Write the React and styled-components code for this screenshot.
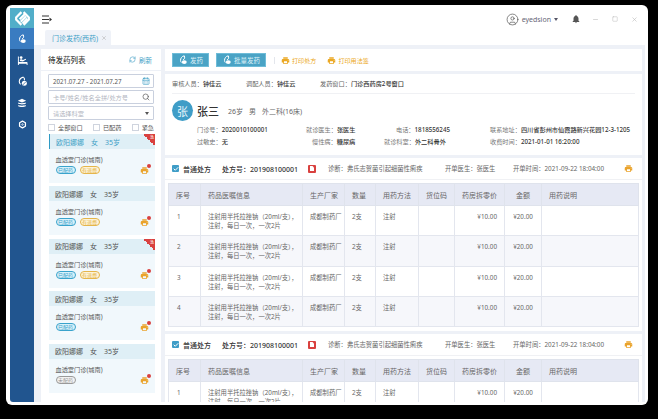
import React from "react";
import styled, { createGlobalStyle } from "styled-components";
import { Search, CalendarDays, RefreshCw, CircleUser, X, Minus, Square, Check } from "lucide-react";
import { MdLocalPrintshop, MdNotifications } from "react-icons/md";

const GlobalStyle = createGlobalStyle`
  html, body { margin: 0; height: 100%; background: #000; }
  * { box-sizing: border-box; }
  body { font-family: "Noto Sans", "Noto Sans CJK SC", sans-serif; color: #555; overflow: hidden; }
  #root { height: 100%; }
`;

const Frame = styled.div`
  width: 658px;
  height: 419px;
  padding: 5px 10px 14px 6px;
`;

const Win = styled.div`
  height: 100%;
  display: flex;
  background: #fff;
  border-radius: 6px;
  padding: 3px 3px 3px 4px;
  overflow: hidden;
`;

const Sidebar = styled.nav`
  width: 24px;
  flex: none;
  background: #21558f;
  border-radius: 3px 0 0 3px;
`;

const Logo = styled.div`
  height: 20px;
  background: #52aec9;
  display: flex;
  align-items: center;
  justify-content: center;
`;

const NavItem = styled.div`
  height: 21.4px;
  display: flex;
  align-items: center;
  justify-content: center;
  background: ${(p) => (p.$active ? "#3a7cc1" : "transparent")};
`;

const Main = styled.div`
  flex: 1;
  min-width: 0;
  display: flex;
  flex-direction: column;
`;

const TopBar = styled.header`
  height: 22px;
  flex: none;
  display: flex;
  align-items: center;
  padding: 0 7px 0 8px;
`;

const UserBox = styled.div`
  margin-left: auto;
  display: flex;
  align-items: center;
  font-size: 7px;
  color: #667;
`;

const UserName = styled.span`
  margin-left: 3px;
`;

const Caret = styled.span`
  width: 0;
  height: 0;
  margin-left: 3px;
  border-left: 2.5px solid transparent;
  border-right: 2.5px solid transparent;
  border-top: 3px solid #556;
`;

const WinButtons = styled.div`
  display: flex;
  align-items: center;
  gap: 13px;
  margin-left: 13px;
  svg:first-child { margin-right: -2px; }
`;

const TabRow = styled.div`
  height: 15px;
  flex: none;
  padding-left: 11px;
  display: flex;
`;

const Tab = styled.div`
  width: 66px;
  background: #eff2f8;
  border-radius: 2px 2px 0 0;
  display: flex;
  align-items: center;
  padding-left: 7px;
  gap: 3px;
  font-size: 7px;
  color: #3f9fc6;
`;

const Content = styled.div`
  flex: 1;
  min-height: 0;
  background: #eef1f7;
  display: flex;
  gap: 4px;
  padding: 4px 3px 0 7px;
`;

const ListPanel = styled.aside`
  width: 120px;
  flex: none;
  background: #fff;
  display: flex;
  flex-direction: column;
  overflow: hidden;
`;

const ListHead = styled.div`
  height: 22px;
  flex: none;
  display: flex;
  align-items: center;
  justify-content: space-between;
  padding: 0 9px 0 7px;
  border-bottom: 1px solid #eef1f7;
  font-size: 7.5px;
  font-weight: 500;
  color: #444;
`;

const Refresh = styled.span`
  display: flex;
  align-items: center;
  gap: 3px;
  font-size: 6.5px;
  font-weight: 400;
  color: #3f9fc6;
`;

const Filters = styled.div`
  padding: 3px 7px 0;
  display: flex;
  flex-direction: column;
  gap: 2px;
`;

const Field = styled.div`
  height: 14px;
  border: 1px solid #c9d0de;
  border-radius: 1px;
  display: flex;
  align-items: center;
  justify-content: space-between;
  padding: 0 3px 0 4px;
  font-size: 6.2px;
  color: ${(p) => (p.$value ? "#555" : "#b2b6bf")};
`;

const SelectCaret = styled.span`
  width: 0;
  height: 0;
  margin-right: 1px;
  border-left: 2.5px solid transparent;
  border-right: 2.5px solid transparent;
  border-top: 3px solid #555;
`;

const Checks = styled.div`
  display: flex;
  justify-content: space-between;
  height: 10px;
  align-items: center;
  font-size: 6.2px;
  color: #555;
`;

const CheckLabel = styled.label`
  display: flex;
  align-items: center;
  gap: 3px;
`;

const BoxEmpty = styled.span`
  width: 7px;
  height: 7px;
  border: 1px solid #cfd4de;
  background: #fff;
`;

const CardList = styled.div`
  padding: 2px 6px 0 8px;
  display: flex;
  flex-direction: column;
  gap: 3.4px;
`;

const Card = styled.div`
  position: relative;
  height: 49px;
  background: #f1f8fc;
  overflow: hidden;
`;

const CardHead = styled.div`
  height: 15px;
  background: #dfeff6;
  display: flex;
  align-items: center;
  padding-left: 6px;
  font-size: 7px;
  color: ${(p) => (p.$active ? "#3f9fc6" : "#555")};
  border-left: ${(p) => (p.$active ? "1px solid #2f9ac4" : "0 none")};
  span + span { margin-left: 7px; }
`;

const Ribbon = styled.div`
  position: absolute;
  top: 0;
  right: 0;
  width: 12px;
  height: 12px;
  background: linear-gradient(45deg, transparent 50%, #d9413f 50%);
  color: #fff;
  font-size: 4px;
  line-height: 8px;
  text-align: right;
  padding-right: 1px;
`;

const CardBody = styled.div`
  padding: 6px 6px 0 6.5px;
  font-size: 6.2px;
  line-height: 9px;
  color: #555;
`;

const TagRow = styled.div`
  display: flex;
  align-items: center;
  gap: 4px;
  margin-top: 2px;
`;

const tagColors = {
  blue: ["#39a3cc", "#d9f1fa"],
  yellow: ["#e5b54a", "#fdf3d8"],
  grey: ["#999", "#f3f3f3"],
};

const Tag = styled.span`
  height: 8px;
  width: 20px;
  border-radius: 4px;
  border: 0.7px solid ${(p) => tagColors[p.$kind][0]};
  background: ${(p) => tagColors[p.$kind][1]};
  color: ${(p) => tagColors[p.$kind][0]};
  font-size: 5px;
  line-height: 6.5px;
  text-align: center;
`;

const Refund = styled.div`
  position: absolute;
  right: 6px;
  bottom: 8px;
  width: 9px;
  height: 9px;
  color: #eaa32b;
  display: flex;
`;

const Dot = styled.span`
  position: absolute;
  top: -2px;
  right: -2px;
  width: 4px;
  height: 4px;
  border-radius: 50%;
  background: #d9413f;
`;

const Detail = styled.section`
  flex: 1;
  min-width: 0;
  display: flex;
  flex-direction: column;
  gap: 3px;
  overflow: hidden;
`;

const ActionBar = styled.div`
  height: 22px;
  flex: none;
  background: #fff;
  display: flex;
  align-items: center;
  padding: 0 7px;
`;

const ActionButton = styled.button`
  height: 14px;
  width: ${(p) => p.$w}px;
  margin-right: 7px;
  border: 1px solid #6fbcd8;
  background: #4aa3c5;
  color: #dff1f7;
  font: inherit;
  font-size: 6.5px;
  padding: 0;
  display: flex;
  align-items: center;
  justify-content: center;
  gap: 2px;
`;

const Sep = styled.span`
  width: 1px;
  height: 7px;
  background: #e3e6ec;
  margin: 0 4px 0 1px;
`;

const PrintLink = styled.span`
  display: flex;
  align-items: center;
  gap: 2px;
  margin-left: 2px;
  margin-right: 9px;
  font-size: 6.1px;
  color: #eba823;
`;

const InfoCard = styled.div`
  height: 81px;
  flex: none;
  background: #fff;
  padding: 0 7px;
`;

const AuditRow = styled.div`
  height: 20px;
  display: flex;
  align-items: center;
  border-bottom: 1px solid #f0f1f4;
  font-size: 6.2px;
  color: #666;
`;

const AuditItem = styled.span`
  width: ${(p) => p.$w}px;
  b { font-weight: 500; color: #333; }
`;

const Patient = styled.div`
  display: flex;
  align-items: center;
  height: 29px;
  margin-top: 2px;
  font-size: 7px;
  color: #666;
`;

const Avatar = styled.div`
  width: 21px;
  height: 21px;
  border-radius: 50%;
  background: #3f9dc7;
  color: #e8f6fb;
  font-size: 11px;
  display: flex;
  align-items: center;
  justify-content: center;
  margin-right: 4px;
`;

const PatientName = styled.strong`
  font-size: 11px;
  font-weight: 500;
  color: #333;
  width: 31px;
`;

const PatientFact = styled.span`
  width: ${(p) => (p.$w ? `${p.$w}px` : "auto")};
`;

const Facts = styled.div`
  display: grid;
  grid-template-columns: 109px 90px 94px 1fr;
  padding-left: 25px;
  row-gap: 3px;
  font-size: 6.2px;
  line-height: 9px;
  color: #777;
  white-space: nowrap;
`;

const Fact = styled.div`
  margin-left: ${(p) => p.$ml || 0}px;
  b { font-weight: 500; color: #333; }
`;

const Rx = styled.div`
  flex: none;
  background: #fff;
  padding-bottom: 4px;
`;

const RxHead = styled.div`
  height: 22px;
  display: flex;
  align-items: center;
  padding: 0 9px 0 7px;
  border-bottom: 1px solid #f0f1f4;
  margin-bottom: 3px;
  font-size: 6.3px;
  color: #666;
  white-space: nowrap;
`;

const RxCheck = styled.span`
  width: 7px;
  height: 7px;
  background: #3f9dc7;
  border-radius: 1px;
  color: #fff;
  display: flex;
  align-items: center;
  justify-content: center;
  margin-right: 4px;
`;

const RxType = styled.b`
  font-size: 7px;
  font-weight: 500;
  color: #333;
  width: 39px;
`;

const RxNo = styled.b`
  font-size: 7px;
  font-weight: 500;
  color: #333;
  width: 86px;
`;

const PdfBadge = styled.span`
  width: 8px;
  height: 8px;
  border-radius: 1px;
  background: #d9413f;
  margin-right: 12px;
  display: flex;
  align-items: center;
  justify-content: center;
`;

const Meta = styled.span`
  width: ${(p) => p.$w}px;
  color: #666;
`;

const RxPrint = styled.span`
  margin-left: auto;
  display: flex;
  color: #eaa32b;
`;

const Table = styled.table`
  width: 470px;
  margin-left: 3px;
  table-layout: fixed;
  border-collapse: collapse;
  font-size: 6.3px;
  color: #666;
`;

const Th = styled.th`
  height: 22px;
  background: #e6e9f4;
  border: 1px solid #dfe3ec;
  font-weight: 400;
  font-size: 7px;
  color: #666;
  white-space: nowrap;
  text-align: ${(p) => p.$align || "left"};
  padding: 0 0 0 ${(p) => p.$pl ?? 7}px;
`;

const Td = styled.td`
  height: 30.3px;
  border: 1px solid #e3e6ee;
  vertical-align: top;
  line-height: 9px;
  padding: 6px ${(p) => p.$pr || 0}px 0 ${(p) => p.$pl ?? 7}px;
  text-align: ${(p) => p.$align || "left"};
  tr:nth-child(even) > & { background: #f6f7fb; }
`;

const widths = [32, 102, 42, 31, 43, 36, 50, 37, 97];
const heads = ["序号", "药品医嘱信息", "生产厂家", "数量", "用药方法", "货位码", "药房拆零价", "金额", "用药说明"];

const LeafPill = () => (
  <svg width="10" height="10" viewBox="0 0 24 24" fill="none" stroke="#fff" strokeWidth="2.4">
    <path d="M15 2c-6 1-9 6-9 11 0 2 1 4 2 5" />
    <path d="M15 2c2 4 1 8-3 10" />
    <ellipse cx="15" cy="17" rx="6" ry="4.5" fill="#fff" stroke="none" />
  </svg>
);

const BedIcon = () => (
  <svg width="11" height="11" viewBox="0 0 24 24" fill="#fff">
    <circle cx="9" cy="5.5" r="3" />
    <path d="M2 3h2v12h17c1 0 2 1 2 2v5h-2v-3H4v3H2z" />
    <path d="M6 13l1-3c1-1 3-1 4 0l2 1 6-3 1 2-7 4z" />
  </svg>
);

const PillCircle = () => (
  <svg width="11" height="11" viewBox="0 0 24 24" fill="none" stroke="#fff" strokeWidth="2.4">
    <path d="M14 2.500c-5 1-9 5-9 10 0 2 1 4 3 6" />
    <path d="M14 2.500c2 2 3 5 2 7" />
    <circle cx="16" cy="16" r="5.500" fill="#fff" stroke="none" />
    <path d="M12.500 19.500l7-7" stroke="#21558f" strokeWidth="1.600" />
  </svg>
);

const Stack = () => (
  <svg width="10" height="10" viewBox="0 0 24 24" fill="#fff">
    <path d="M12 2l10 4.500-10 4.500L2 6.500z" />
    <path d="M3 11c3 2 15 2 18 0v3c-3 2-15 2-18 0z" />
    <path d="M3 17c3 2 15 2 18 0v2.500c-3 2.500-15 2.500-18 0z" />
  </svg>
);

const Gear = () => (
  <svg width="9" height="9" viewBox="0 0 24 24" fill="none" stroke="#fff">
    <path d="M12 3l7.800 4.500v9L12 21l-7.800-4.500v-9z" strokeWidth="3.400" strokeLinejoin="round" />
    <circle cx="12" cy="12" r="2" strokeWidth="2" />
  </svg>
);

const LogoMark = () => (
  <svg width="17" height="17" viewBox="0 0 24 24" fill="none" stroke="#fff" strokeWidth="3">
    <path d="M10.500 3L3 10.500v3L10.500 21" />
    <path d="M13.500 3L21 10.500v3L13.500 21" />
    <path d="M8 13l7.500-7.500M9.500 16.500l7.500-7.500M12 19l7-7" />
  </svg>
);

const MenuIcon = () => (
  <svg width="10" height="9" viewBox="0 0 10 9" fill="#333">
    <rect x="0" y="0.500" width="7" height="1" />
    <rect x="0" y="4" width="7" height="1" />
    <rect x="0" y="7.500" width="7" height="1" />
    <path d="M7.500 2.500L10 4.500 7.500 6.500z" />
  </svg>
);

const PatientCard = ({ active, ribbon, kind = "blue", label = "已配药", refund }) => (
  <Card>
    <CardHead $active={active}>
      <span>欧阳娜娜</span>
      <span>女</span>
      <span>35岁</span>
    </CardHead>
    {ribbon && <Ribbon>急</Ribbon>}
    <CardBody>
      血透室门诊(城南)
      <TagRow>
        <Tag $kind={kind}>{label}</Tag>
        {refund && <Tag $kind="yellow">有退费</Tag>}
      </TagRow>
    </CardBody>
    <Refund>
      <MdLocalPrintshop size={9} />
      <Dot />
    </Refund>
  </Card>
);

const Prescription = ({ rows }) => (
  <Rx>
    <RxHead>
      <RxCheck><Check size={6} strokeWidth={4} /></RxCheck>
      <RxType>普通处方</RxType>
      <RxNo>处方号：201908100001</RxNo>
      <PdfBadge>
        <svg width="4" height="5" viewBox="0 0 4 5" fill="#fff"><path d="M0 0h2.500L4 1.500V5H0z" /></svg>
      </PdfBadge>
      <Meta $w={117}>诊断：弗氏志贺菌引起细菌性痢疾</Meta>
      <Meta $w={68}>开单医生：张医生</Meta>
      <Meta $w={90}>开单时间：2021-09-22 18:04:00</Meta>
      <RxPrint><MdLocalPrintshop size={9} /></RxPrint>
    </RxHead>
    <Table>
      <colgroup>
        {widths.map((w, i) => <col key={i} style={{ width: w }} />)}
      </colgroup>
      <thead>
        <tr>
          {heads.map((h, i) => (
            <Th key={h} $align={i === 7 ? "center" : "left"} $pl={i === 7 ? 0 : 7}>{h}</Th>
          ))}
        </tr>
      </thead>
      <tbody>
        {rows.map((n) => (
          <tr key={n}>
            <Td $pl={8}>{n}</Td>
            <Td>注射用半托拉挫钠（20ml/支），<br />注射，每日一次，一次2片</Td>
            <Td>成都制药厂</Td>
            <Td>2支</Td>
            <Td>注射</Td>
            <Td />
            <Td $align="right" $pr={7}>¥10.00</Td>
            <Td $align="center" $pl={0}>¥20.00</Td>
            <Td />
          </tr>
        ))}
      </tbody>
    </Table>
  </Rx>
);

export default function App() {
  return (
    <Frame>
      <GlobalStyle />
      <Win>
        <Sidebar>
          <Logo><LogoMark /></Logo>
          <NavItem $active><LeafPill /></NavItem>
          <NavItem><BedIcon /></NavItem>
          <NavItem><PillCircle /></NavItem>
          <NavItem><Stack /></NavItem>
          <NavItem><Gear /></NavItem>
        </Sidebar>
        <Main>
          <TopBar>
            <MenuIcon />
            <UserBox>
              <CircleUser size={13} strokeWidth={1.3} color="#555" />
              <UserName>eyedsion</UserName>
              <Caret />
              <WinButtons>
                <MdNotifications size={10} color="#555" />
                <Minus size={7} color="#bbb" />
                <Square size={6} color="#bbb" />
                <X size={7} color="#bbb" />
              </WinButtons>
            </UserBox>
          </TopBar>
          <TabRow>
            <Tab>门诊发药(西药)<X size={6} color="#aaa" /></Tab>
          </TabRow>
          <Content>
            <ListPanel>
              <ListHead>
                待发药列表
                <Refresh><RefreshCw size={7} />刷新</Refresh>
              </ListHead>
              <Filters>
                <Field $value>2021.07.27 - 2021.07.27<CalendarDays size={8} color="#3f9fc6" /></Field>
                <Field>卡号/姓名/姓名全拼/处方号<Search size={8} color="#555" /></Field>
                <Field>请选择科室<SelectCaret /></Field>
                <Checks>
                  <CheckLabel><BoxEmpty />全部窗口</CheckLabel>
                  <CheckLabel><BoxEmpty />已配药</CheckLabel>
                  <CheckLabel><BoxEmpty />紧急</CheckLabel>
                </Checks>
              </Filters>
              <CardList>
                <PatientCard active ribbon refund />
                <PatientCard refund />
                <PatientCard ribbon refund />
                <PatientCard />
                <PatientCard kind="grey" label="未配药" />
              </CardList>
            </ListPanel>
            <Detail>
              <ActionBar>
                <ActionButton $w={37}><LeafPill />发药</ActionButton>
                <ActionButton $w={50}><LeafPill />批量发药</ActionButton>
                <Sep />
                <PrintLink><MdLocalPrintshop size={9} />打印处方</PrintLink>
                <PrintLink><MdLocalPrintshop size={9} />打印用法签</PrintLink>
              </ActionBar>
              <InfoCard>
                <AuditRow>
                  <AuditItem $w={74}>审核人员：<b>钟佳云</b></AuditItem>
                  <AuditItem $w={74}>调配人员：<b>钟佳云</b></AuditItem>
                  <AuditItem $w={120}>发药窗口：<b>门诊西药房2号窗口</b></AuditItem>
                </AuditRow>
                <Patient>
                  <Avatar>张</Avatar>
                  <PatientName>张三</PatientName>
                  <PatientFact $w={21}>26岁</PatientFact>
                  <PatientFact $w={13}>男</PatientFact>
                  <PatientFact>外二科(16床)</PatientFact>
                </Patient>
                <Facts>
                  <Fact>门诊号：<b>2020010100001</b></Fact>
                  <Fact>就诊医生：<b>张医生</b></Fact>
                  <Fact>电话：<b>1818556245</b></Fact>
                  <Fact>联系地址：<b>四川省彭州市仙霞路新兴花园12-3-1205</b></Fact>
                  <Fact>过敏史：<b>无</b></Fact>
                  <Fact $ml={6}>慢性病：<b>糖尿病</b></Fact>
                  <Fact $ml={-12}>就诊科室：<b>外二科骨外</b></Fact>
                  <Fact>收费时间：<b>2021-01-01 16:20:00</b></Fact>
                </Facts>
              </InfoCard>
              <Prescription rows={[1, 2, 3, 4]} />
              <Prescription rows={[1]} />
            </Detail>
          </Content>
        </Main>
      </Win>
    </Frame>
  );
}
